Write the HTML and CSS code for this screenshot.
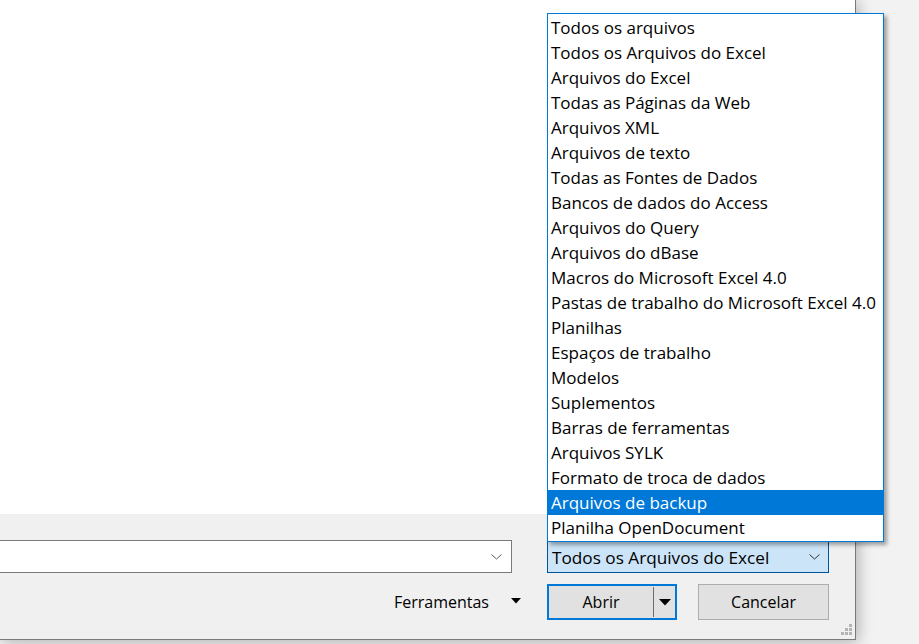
FILE: index.html
```html
<!DOCTYPE html>
<html lang="pt">
<head>
<meta charset="utf-8">
<title>Abrir</title>
<link rel="stylesheet" href="styles.css">
</head>
<body>
<div class="desk">
  <div class="dialog">
    <div class="content"></div>
    <div class="footer">
      <div class="row">
        <div class="filename">
          <svg class="chev" width="11" height="6" viewBox="0 0 11 6"><polyline points="0.5,0.5 5.5,5 10.5,0.5" fill="none" stroke="#606060" stroke-width="1"/></svg>
        </div>
        <div class="filter">
          <span>Todos os Arquivos do Excel</span>
          <svg class="chev" width="11" height="6" viewBox="0 0 11 6"><polyline points="0.5,0.5 5.5,5 10.5,0.5" fill="none" stroke="#333" stroke-width="1"/></svg>
        </div>
      </div>
      <div class="row buttons">
        <div class="tools">
          <span>Ferramentas</span>
          <svg width="10" height="6" viewBox="0 0 10 6"><polygon points="0,0 10,0 5,5.5" fill="#000"/></svg>
        </div>
        <div class="btn split">
          <span class="main">Abrir</span>
          <span class="sep"></span>
          <span class="arrow"><svg width="12" height="7" viewBox="0 0 12 7"><polygon points="0,0 12,0 6,6.5" fill="#000"/></svg></span>
        </div>
        <div class="btn cancel">Cancelar</div>
      </div>
      <div class="grip">
        <i class="g1"></i><i class="g2"></i><i class="g3"></i><i class="g4"></i><i class="g5"></i><i class="g6"></i>
      </div>
    </div>
  </div>
  <ul class="list">
    <li>Todos os arquivos</li>
    <li>Todos os Arquivos do Excel</li>
    <li>Arquivos do Excel</li>
    <li>Todas as Páginas da Web</li>
    <li>Arquivos XML</li>
    <li>Arquivos de texto</li>
    <li>Todas as Fontes de Dados</li>
    <li>Bancos de dados do Access</li>
    <li>Arquivos do Query</li>
    <li>Arquivos do dBase</li>
    <li>Macros do Microsoft Excel 4.0</li>
    <li>Pastas de trabalho do Microsoft Excel 4.0</li>
    <li>Planilhas</li>
    <li>Espaços de trabalho</li>
    <li>Modelos</li>
    <li>Suplementos</li>
    <li>Barras de ferramentas</li>
    <li>Arquivos SYLK</li>
    <li>Formato de troca de dados</li>
    <li class="sel">Arquivos de backup</li>
    <li>Planilha OpenDocument</li>
  </ul>
</div>
</body>
</html>
```

FILE: styles.css
```css
* { box-sizing: border-box; }
html, body { margin: 0; padding: 0; }
body {
  width: 919px;
  height: 644px;
  overflow: hidden;
  background: #f2f2f2;
  font-family: "Open Sans", "Noto Sans", sans-serif;
  font-size: 16px;
  color: #000;
}
.desk {
  position: relative;
  width: 919px;
  height: 644px;
}
.dialog {
  width: 856px;
  height: 640px;
  display: flex;
  flex-direction: column;
  border-right: 1px solid #7a7a7a;
  border-bottom: 1px solid #7a7a7a;
  box-shadow: 2px 2px 14px rgba(0,0,0,0.28);
  background: #f0f0f0;
}
.content {
  height: 514px;
  background: #fff;
  flex: none;
}
.footer {
  position: relative;
  flex: 1;
  background: #f0f0f0;
  padding: 26px 26px 0 0;
  display: flex;
  flex-direction: column;
  gap: 11px;
}
.row {
  display: flex;
  align-items: center;
}
.filename {
  flex: 1;
  height: 33px;
  margin-left: -2px;
  background: #fff;
  border: 1px solid #7a7a7a;
  display: flex;
  align-items: center;
  justify-content: flex-end;
  padding-right: 9px;
}
.filter {
  width: 282px;
  height: 33px;
  margin-left: 35px;
  background: #cce4f7;
  border: 1px solid #005499;
  display: flex;
  align-items: center;
  justify-content: space-between;
  padding: 1px 8px 0 4px;
  font-size: 17.2px;
}
.chev { display: block; }
.buttons {
  justify-content: flex-end;
}
.tools {
  display: flex;
  align-items: center;
  gap: 22px;
  margin-right: 26px;
  font-size: 16px;
}
.tools svg { margin-top: -2px; }
.btn {
  height: 36px;
  background: #e1e1e1;
  display: flex;
  align-items: center;
  justify-content: center;
  font-size: 16px;
}
.split {
  width: 130px;
  border: 2px solid #0078d7;
  justify-content: flex-start;
}
.split .main {
  width: 104px;
  text-align: center;
}
.split .sep {
  width: 1px;
  height: 30px;
  background: #6d6d6d;
}
.split .arrow {
  flex: 1;
  display: flex;
  justify-content: center;
  align-items: center;
}
.cancel {
  width: 131px;
  margin-left: 21px;
  border: 1px solid #adadad;
}
.grip {
  position: absolute;
  right: 3px;
  bottom: 3px;
  width: 12px;
  height: 12px;
}
.grip i {
  position: absolute;
  width: 3px;
  height: 3px;
  background: #b4b4b4;
}
.grip .g1 { right: 0; top: 0; }
.grip .g2 { right: 0; top: 4px; }
.grip .g3 { right: 4px; top: 4px; }
.grip .g4 { right: 0; top: 8px; }
.grip .g5 { right: 4px; top: 8px; }
.grip .g6 { right: 8px; top: 8px; }
.list {
  position: absolute;
  left: 547px;
  top: 13px;
  width: 337px;
  margin: 0;
  padding: 1px 0;
  list-style: none;
  background: #fff;
  border: 1px solid #0078d7;
  box-shadow: 3px 3px 4px rgba(0,0,0,0.35);
  font-size: 17px;
}
.list li {
  height: 25px;
  line-height: 26px;
  padding-left: 3px;
  white-space: nowrap;
}
.list li.sel {
  background: #0078d7;
  color: #fff;
}
```
